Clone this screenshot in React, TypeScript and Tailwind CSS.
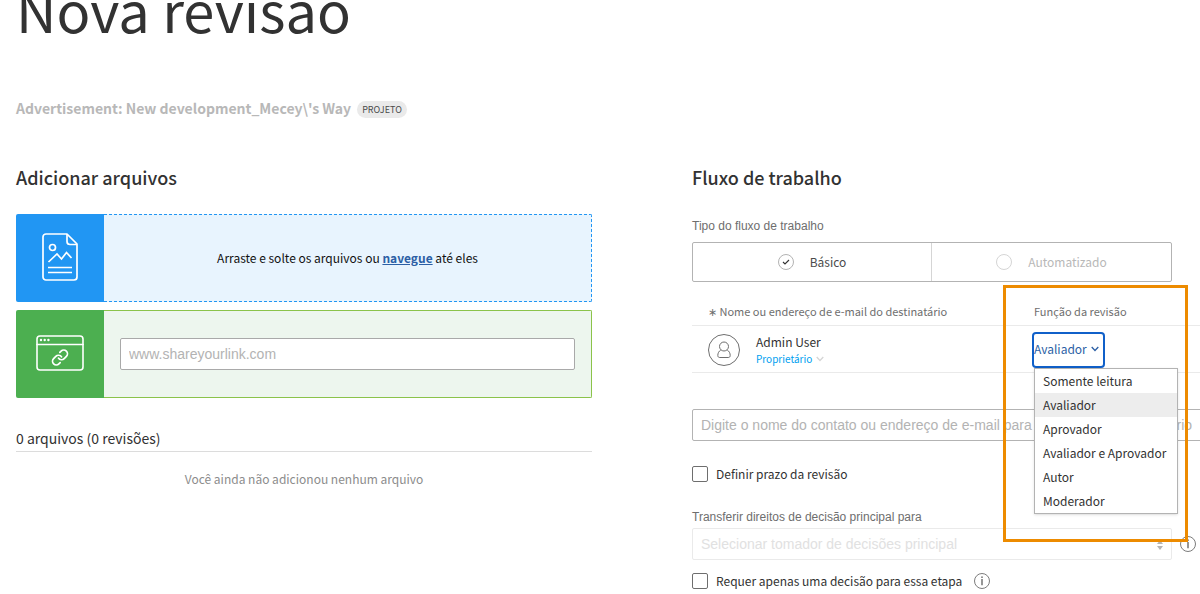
import { useState } from "react";

const roles = [
  "Somente leitura",
  "Avaliador",
  "Aprovador",
  "Avaliador e Aprovador",
  "Autor",
  "Moderador",
];

function FileIcon() {
  return (
    <svg width="36" height="48" viewBox="0 0 36 48" fill="none" stroke="#fff" strokeWidth="1.7" strokeLinejoin="round" aria-hidden="true">
      <path d="M4 1h21l10 10v33a3 3 0 0 1-3 3H4a3 3 0 0 1-3-3V4a3 3 0 0 1 3-3z" />
      <path d="M25 1v7.500a3 3 0 0 0 3 3h7" />
      <circle cx="10.500" cy="14.500" r="3" />
      <path d="M6.500 29l8.500-8 4.500 5 5-6.500 5 5.500" strokeLinejoin="miter" />
      <path d="M6 34.500h24M6 39.500h24" />
    </svg>
  );
}

function LinkWindowIcon() {
  return (
    <svg width="48" height="36" viewBox="0 0 48 36" fill="none" stroke="#fff" strokeWidth="1.600" strokeLinecap="round" strokeLinejoin="round" aria-hidden="true">
      <rect x="1" y="1" width="46" height="34" rx="3" />
      <path d="M1 9.500h46" />
      <g fill="#fff" stroke="none">
        <circle cx="5" cy="5" r="1.200" />
        <circle cx="8.700" cy="5" r="1.200" />
        <circle cx="12.400" cy="5" r="1.200" />
      </g>
      <g transform="translate(15 13.500) scale(0.75)">
        <path strokeWidth="2.300" d="M10 13a5 5 0 0 0 7.540.54l3-3a5 5 0 0 0-7.070-7.070l-1.720 1.710" />
        <path strokeWidth="2.300" d="M14 11a5 5 0 0 0-7.540-.54l-3 3a5 5 0 0 0 7.070 7.070l1.710-1.710" />
      </g>
    </svg>
  );
}

function UserIcon() {
  return (
    <svg width="32" height="32" viewBox="0 0 32 32" fill="none" stroke="#6e6e6e" aria-hidden="true" className="shrink-0">
      <circle cx="16" cy="16" r="15.500" />
      <circle cx="16" cy="12.500" r="4.500" />
      <path d="M12.800 16c-2 1.200-3 3.200-3 5.500 0 1.300.7 2 2 2h8.400c1.300 0 2-.7 2-2 0-2.300-1-4.300-3-5.500" />
    </svg>
  );
}

function InfoIcon() {
  return (
    <svg width="16" height="16" viewBox="0 0 16 16" fill="none" stroke="#7c7c7c" aria-hidden="true" className="block">
      <circle cx="8" cy="8" r="7.500" />
      <path d="M8 6v6.200" strokeWidth="1.600" />
      <circle cx="8" cy="4.200" r="0.900" fill="#7c7c7c" stroke="none" />
    </svg>
  );
}

function Chevron({ className }: { className: string }) {
  return (
    <svg width="8" height="6" viewBox="0 0 8 6" fill="none" stroke="currentColor" strokeWidth="1.300" aria-hidden="true" className={className}>
      <path d="M0.700 1L4 4.500 7.300 1" />
    </svg>
  );
}

function CheckRow({ label }: { label: string }) {
  return (
    <label className="flex h-4 items-center gap-2 text-xs text-[#323232]">
      <input type="checkbox" className="size-4 shrink-0 appearance-none rounded-xs border border-[#6e6e6e] bg-white checked:bg-[#1473e6]" />
      {label}
    </label>
  );
}

function FilesSection() {
  return (
    <section className="min-w-0">
      <h2 className="text-[18px] leading-6 font-medium text-[#323232]">Adicionar arquivos</h2>

      <div className="mt-[25px] flex h-[88px] overflow-hidden rounded-xs">
        <div className="flex w-[88px] shrink-0 items-center justify-center bg-[#2196f3] pb-0.5">
          <FileIcon />
        </div>
        <p className="flex flex-1 items-center justify-center border border-l-0 border-dashed border-[#2196f3] bg-[#e8f4fe] text-xs text-[#111]">
          <span>
            Arraste e solte os arquivos ou{" "}
            <a href="#navegue" className="font-bold text-[#2c5fa5] underline">navegue</a> até eles
          </span>
        </p>
      </div>

      <div className="mt-2 flex h-[88px] overflow-hidden rounded-xs">
        <div className="flex w-[88px] shrink-0 items-center justify-center bg-[#4caf50] pb-0.5">
          <LinkWindowIcon />
        </div>
        <div className="flex flex-1 items-center border border-l-0 border-[#8bc34a] bg-[#edf6ee] px-4">
          <input
            type="url"
            aria-label="Link"
            placeholder="www.shareyourlink.com"
            className="h-8 w-full rounded-xs border border-[#a9a9a9] bg-white px-2 font-['Liberation_Sans',sans-serif] text-sm placeholder:text-[#b3b3b3]"
          />
        </div>
      </div>

      <h3 className="mt-7 border-b border-[#dcdcdc] pb-px text-[14px] leading-6 text-[#323232]">0 arquivos (0 revisões)</h3>
      <p className="mt-[15px] text-center text-xs leading-6 text-[#8c8c8c]">Você ainda não adicionou nenhum arquivo</p>
    </section>
  );
}

function RolePicker() {
  const [role, setRole] = useState("Avaliador");
  const [open, setOpen] = useState(true);
  return (
    <div className="relative">
      <button
        type="button"
        aria-haspopup="listbox"
        aria-expanded={open}
        onClick={() => setOpen(!open)}
        className="flex h-8 w-[69px] items-center gap-1 rounded-xs pb-0.5 text-xs text-[#2c5fa5] ring-2 ring-[#1060c9]"
      >
        {role}
        <Chevron className="shrink-0" />
      </button>
      {open && (
        <ul role="listbox" aria-label="Função da revisão" className="absolute top-full left-0 z-10 mt-0.5 w-36 border border-[#b3b3b3] bg-white shadow-sm">
          {roles.map((name) => (
            <li
              key={name}
              role="option"
              aria-selected={name === role}
              onClick={() => {
                setRole(name);
                setOpen(false);
              }}
              className="h-6 cursor-pointer px-2 text-xs leading-6 whitespace-nowrap text-[#323232] aria-selected:bg-[#ededed]"
            >
              {name}
            </li>
          ))}
        </ul>
      )}
    </div>
  );
}

function WorkflowSection() {
  return (
    <section className="min-w-0">
      <h2 className="text-[18px] leading-6 font-medium text-[#323232]">Fluxo de trabalho</h2>

      <fieldset className="mt-[25px] mr-7">
        <legend className="h-7 font-['Liberation_Sans',sans-serif] text-xs leading-6 text-[#6e6e6e]">Tipo do fluxo de trabalho</legend>
        <div className="grid h-10 grid-cols-2 rounded-xs border border-[#b3b3b3] text-xs">
          <label className="flex items-center justify-center gap-4 border-r border-[#d5d5d5] text-[#4b4b4b]">
            <span className="grid place-items-center">
              <input type="radio" name="workflow" defaultChecked className="col-start-1 row-start-1 size-4 appearance-none rounded-full border border-[#b3b3b3]" />
              <svg width="8" height="6" viewBox="0 0 8 6" fill="none" stroke="#323232" strokeWidth="1.100" aria-hidden="true" className="col-start-1 row-start-1">
                <path d="M1 3l2 2 4-4" />
              </svg>
            </span>
            Básico
          </label>
          <label className="flex items-center justify-center gap-4 text-[#b8b8b8]">
            <input type="radio" name="workflow" className="size-4 appearance-none rounded-full border border-[#d5d5d5]" />
            Automatizado
          </label>
        </div>
      </fieldset>

      <table className="w-full table-fixed border-collapse text-left">
        <thead>
          <tr className="h-[43px] border-b border-[#eaeaea] text-[11px] leading-4 text-[#6e6e6e]">
            <th scope="col" className="w-[342px] pt-4 pl-4 font-normal">∗ Nome ou endereço de e-mail do destinatário</th>
            <th scope="col" className="pt-4 font-normal">Função da revisão</th>
          </tr>
        </thead>
        <tbody>
          <tr className="h-[47px] border-b border-[#eaeaea]">
            <td className="pt-0.5 pl-4">
              <div className="flex items-center gap-4">
                <UserIcon />
                <div>
                  <p className="text-xs leading-[18px] text-[#323232]">Admin User</p>
                  <p className="flex items-center gap-1 text-[10px] leading-4 text-[#00a0f0]">
                    Proprietário
                    <Chevron className="text-[#d5d5d5]" />
                  </p>
                </div>
              </div>
            </td>
            <td className="relative pt-0.5">
              <RolePicker />
              <div className="pointer-events-none absolute -top-[41px] -left-[31px] z-20 h-[257px] w-[185px] border-3 border-[#ed8b00]" />
            </td>
          </tr>
        </tbody>
      </table>

      <input
        type="text"
        aria-label="Nome do contato ou endereço de e-mail"
        placeholder="Digite o nome do contato ou endereço de e-mail para adicionar um destinatário"
        className="mt-9 block h-8 w-[calc(100%+16px)] rounded-xs border border-[#b3b3b3] px-2 font-['Liberation_Sans',sans-serif] text-sm placeholder:text-[#b3b3b3]"
      />

      <div className="mt-[25px]">
        <CheckRow label="Definir prazo da revisão" />
      </div>

      <label htmlFor="decision-maker" className="mt-6 block font-['Liberation_Sans',sans-serif] text-xs leading-[22px] text-[#6e6e6e]">
        Transferir direitos de decisão principal para
      </label>
      <div className="flex items-center gap-2">
        <div className="relative flex-1">
          <select
            id="decision-maker"
            disabled
            className="block h-8 w-full appearance-none rounded-xs border border-[#eaeaea] bg-white px-2 font-['Liberation_Sans',sans-serif] text-sm text-[#e1e1e1] opacity-100"
          >
            <option>Selecionar tomador de decisões principal</option>
          </select>
          <svg width="6" height="10" viewBox="0 0 6 10" fill="#b3b3b3" aria-hidden="true" className="pointer-events-none absolute top-3 right-[9px]">
            <path d="M0 4l3-4 3 4zM0 6l3 4 3-4z" />
          </svg>
        </div>
        <button type="button" aria-label="Informações sobre a decisão" className="mr-1">
          <InfoIcon />
        </button>
      </div>

      <div className="mt-[13px] flex items-center gap-3">
        <CheckRow label="Requer apenas uma decisão para essa etapa" />
        <button type="button" aria-label="Informações sobre a etapa">
          <InfoIcon />
        </button>
      </div>
    </section>
  );
}

export default function App() {
  return (
    <main className="overflow-hidden bg-white pl-4 font-['Noto_Sans_CJK_SC',sans-serif]">
      <h1 className="-mt-9 text-[56px] leading-[90px] text-[#323232]">Nova revisão</h1>
      <div className="mt-[42px] flex h-6 items-center gap-1.5 text-[14px] font-bold text-[#b8b8b8]">
        <span>Advertisement: New development_Mecey\'s Way</span>
        <span className="mt-0.5 rounded-full bg-[#eaeaea] px-[5px] text-[9px] leading-[17px] font-normal text-[#4b4b4b]">PROJETO</span>
      </div>
      <div className="mt-[45px] grid grid-cols-[minmax(0,576fr)_minmax(0,508fr)] gap-[100px]">
        <FilesSection />
        <WorkflowSection />
      </div>
    </main>
  );
}
